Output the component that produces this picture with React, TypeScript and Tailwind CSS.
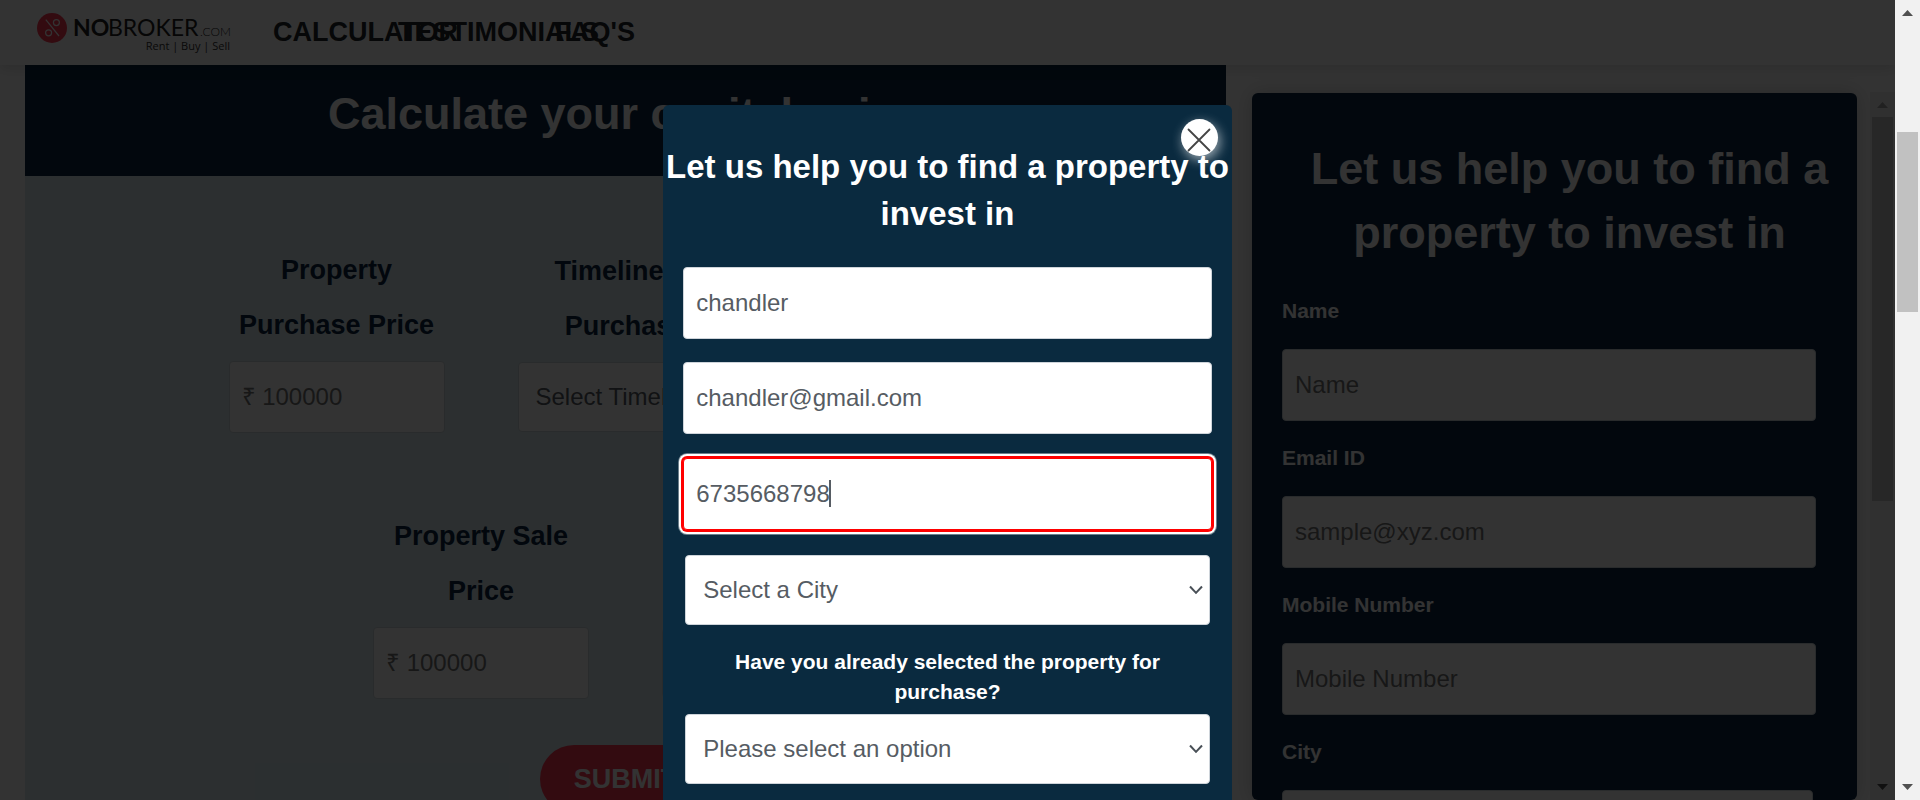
import React from "react";

type FieldProps = { id: string; label: string; type?: string; placeholder?: string };

const navLinks = [
  { href: "#calculator", text: "CALCULATOR", width: "w-[125px]" },
  { href: "#testimonials", text: "TESTIMONIALS", width: "w-[157px]" },
  { href: "#faqs", text: "FAQ'S", width: "w-[90px]" },
];

function Logo() {
  return (
    <svg width="200" height="56" viewBox="0 4 200 56" role="img" aria-label="NoBroker.com">
      <circle cx="17" cy="28" r="15" fill="#fd3752" />
      <g fill="none" stroke="#ffffff" strokeWidth="1.2">
        <circle cx="21.4" cy="22.6" r="3" />
        <circle cx="13.6" cy="32.8" r="3" />
        <path d="M10.8 19.6 24 36" />
      </g>
      <g fill="#212121" fontFamily="Lato, sans-serif">
        <text x="38" y="36" fontSize="23" fontWeight="700">NO</text>
        <text x="73" y="36" fontSize="23" fontWeight="400">BROKER</text>
        <text x="165" y="36" fontSize="12" fontWeight="300">.COM</text>
      </g>
      <text x="195" y="50" textAnchor="end" fontSize="11" fill="#333333" fontFamily="'Open Sans', 'Noto Sans', sans-serif">
        Rent | Buy | Sell
      </text>
    </svg>
  );
}

function Arrow({ down = false, className }: { down?: boolean; className: string }) {
  return (
    <svg width="11" height="6" viewBox="0 0 11 6" className={className} aria-hidden="true">
      <path d={down ? "M0 0h11L5.5 6z" : "M0 6h11L5.5 0z"} fill="currentColor" />
    </svg>
  );
}

function Chevron() {
  return (
    <svg
      width="14"
      height="9"
      viewBox="0 0 14 9"
      className="pointer-events-none absolute right-[7px] top-1/2 -translate-y-1/2 text-[#495057]"
      aria-hidden="true"
    >
      <path d="M1 1 7 7.4 13 1" fill="none" stroke="currentColor" strokeWidth="2" />
    </svg>
  );
}

function PriceField({ id, label }: FieldProps) {
  return (
    <div className="flex w-[216px] flex-col items-center gap-2">
      <label htmlFor={id} className="text-center text-[27px] leading-[55px] font-bold text-[#0a2540]">
        {label}
      </label>
      <input
        id={id}
        placeholder="₹ 100000"
        className="h-[72px] w-full rounded border border-[#ced4da] bg-white px-3 text-2xl placeholder:text-[#757575]"
      />
    </div>
  );
}

function TimelineField({ id, label }: FieldProps) {
  return (
    <div className="flex w-[216px] flex-col items-center gap-2">
      <label htmlFor={id} className="text-center text-[27px] leading-[55px] font-bold text-[#0a2540]">
        {label}
      </label>
      <select
        id={id}
        className="h-[70px] w-full appearance-none rounded border border-[#ced4da] bg-white px-[17px] text-2xl text-[#565c63]"
      >
        <option>Select Timeline</option>
      </select>
    </div>
  );
}

function SideField({ id, label, type = "text", placeholder }: FieldProps) {
  return (
    <div className="flex flex-col gap-[22px]">
      <label htmlFor={id} className="text-[21px] leading-8 font-bold text-white">
        {label}
      </label>
      <input
        id={id}
        type={type}
        placeholder={placeholder}
        className="h-[72px] w-full rounded border border-[#ced4da] bg-white px-3 text-2xl placeholder:text-[#757575]"
      />
    </div>
  );
}

function Calculator() {
  return (
    <section id="calculator" className="flex min-w-0 grow-[1201] basis-0 flex-col bg-[#d9ebf0]">
      <h1 className="bg-[#0a2540] pt-[17px] pb-[30px] text-center text-[45px] leading-[64px] font-bold text-white">
        Calculate your capital gains
      </h1>
      <form className="flex grow flex-col items-center pt-[67px]">
        <div className="flex max-w-[900px] flex-wrap items-center justify-center gap-x-[73px] gap-y-[76px]">
          <PriceField id="purchase-price" label="Property Purchase Price" />
          <TimelineField id="purchase-timeline" label="Timeline of Purchase" />
          <PriceField id="improvement-cost" label="Cost of Improvement" />
          <PriceField id="sale-price" label="Property Sale Price" />
          <TimelineField id="sale-timeline" label="Timeline of Property Sale" />
        </div>
        <button type="button" className="mt-[46px] h-[68px] rounded-full bg-[#fd3752] px-[34px] text-[27px] font-bold text-white">
          SUBMIT
        </button>
      </form>
    </section>
  );
}

function LeadCard() {
  return (
    <aside className="mt-7 ml-[26px] min-w-0 grow-[605] basis-0 rounded-md bg-[#0a2540] shadow-[0_0_20px_rgba(0,0,0,0.2)]">
      <div className="pt-11 pl-[30px]">
        <h2 className="text-center text-[45px] leading-[64px] font-bold text-white">
          Let us help you to find a property to invest in
        </h2>
        <form className="mt-[30px] flex flex-col gap-[21px] pr-[41px]">
          <SideField id="lead-name" label="Name" placeholder="Name" />
          <SideField id="lead-email" label="Email ID" type="email" placeholder="sample@xyz.com" />
          <SideField id="lead-mobile" label="Mobile Number" type="tel" placeholder="Mobile Number" />
          <div className="flex flex-col gap-[22px]">
            <label htmlFor="lead-city" className="text-[21px] leading-8 font-bold text-white">
              City
            </label>
            <select id="lead-city" className="mr-[3px] h-[70px] appearance-none rounded border border-[#ced4da] bg-white px-[17px] text-2xl text-[#565c63]">
              <option>Select a City</option>
            </select>
          </div>
        </form>
      </div>
    </aside>
  );
}

function Dialog() {
  const field = "block h-[72px] w-full rounded border border-[#ced4da] bg-white px-3 text-2xl text-[#565c63]";
  const select = "block h-[70px] w-full appearance-none rounded border border-[#ced4da] bg-white px-[17px] text-2xl text-[#565c63]";
  return (
    <div className="absolute inset-0 flex justify-center overflow-hidden bg-black/80 pt-[105px]">
      <div role="dialog" aria-modal="true" aria-labelledby="dialog-title" className="relative h-fit w-[30%] rounded-md bg-[#0a2a3f] pt-[38px] pb-12">
        <h2 id="dialog-title" className="text-center text-[33px] leading-[47px] font-bold text-white">
          Let us help you to find a property to invest in
        </h2>
        <button
          type="button"
          aria-label="Close"
          className="absolute top-3.5 right-3.5 flex size-[37px] items-end justify-center rounded-full bg-white pb-1 shadow-[2px_4px_12px_rgba(255,255,255,0.6)]"
        >
          <svg width="24" height="24" viewBox="0 0 24 24" aria-hidden="true">
            <path d="M1.5 1.5 22.5 22.5M22.5 1.5 1.5 22.5" stroke="#444444" strokeWidth="1.8" strokeLinecap="round" />
          </svg>
        </button>
        <form className="mt-[30px] px-5">
          <input aria-label="Name" defaultValue="chandler" className={field} />
          <input aria-label="Email ID" type="email" defaultValue="chandler@gmail.com" className={`${field} mt-[23px]`} />
          <div className="relative mt-6">
            <input
              aria-label="Mobile Number"
              type="tel"
              defaultValue="6735668798"
              className="block h-[72px] w-full rounded border border-[#ff0000] bg-white px-3 text-2xl text-[#565c63] shadow-[0_0_0_2px_#ff0000,0_0_0_4px_#ffffff,0_0_0_5px_rgba(255,255,255,0.4)]"
            />
            <span className="absolute top-[22px] left-[146px] h-[27px] w-0.5 bg-[#565c63]" />
          </div>
          <div className="mt-[25px] px-0.5">
            <div className="relative">
              <select aria-label="City" className={select}>
                <option>Select a City</option>
              </select>
              <Chevron />
            </div>
            <label htmlFor="selected-property" className="mt-[22px] block px-8 text-center text-[21px] leading-[30px] font-bold text-white">
              Have you already selected the property for purchase?
            </label>
            <div className="relative mt-[7px]">
              <select id="selected-property" className={select}>
                <option>Please select an option</option>
              </select>
              <Chevron />
            </div>
          </div>
        </form>
      </div>
    </div>
  );
}

export default function App() {
  return (
    <div className="flex h-screen overflow-hidden bg-white font-['Liberation_Sans',Arial,sans-serif]">
      <div className="relative flex min-w-0 grow flex-col overflow-hidden">
        <header className="relative z-0 flex h-[65px] shrink-0 items-center bg-white pb-0.5 pl-[35px] shadow-[0_4px_12px_rgba(0,0,0,0.12)]">
          <a href="#home" className="w-[238px] shrink-0">
            <Logo />
          </a>
          <nav className="flex">
            {navLinks.map((link) => (
              <a key={link.text} href={link.href} className={`${link.width} text-[27px] leading-9 font-bold whitespace-nowrap text-[#212529]`}>
                {link.text}
              </a>
            ))}
          </nav>
        </header>
        <main className="flex min-h-0 grow pl-[25px]">
          <Calculator />
          <LeadCard />
          <div className="mt-[27px] ml-[13px] flex w-[25px] shrink-0 flex-col items-center bg-[#f1f1f1] pt-2.5 pb-2.5">
            <Arrow className="text-[#a3a3a3]" />
            <div className="mt-[9px] h-[384px] w-[21px] bg-[#c1c1c1]" />
            <Arrow down className="mt-auto text-[#505050]" />
          </div>
        </main>
        <Dialog />
      </div>
      <div className="flex w-[25px] shrink-0 flex-col items-center bg-[#f1f1f1] py-2.5">
        <Arrow className="text-[#505050]" />
        <div className="mt-[116px] h-[180px] w-[21px] bg-[#c1c1c1]" />
        <Arrow down className="mt-auto text-[#505050]" />
      </div>
    </div>
  );
}
